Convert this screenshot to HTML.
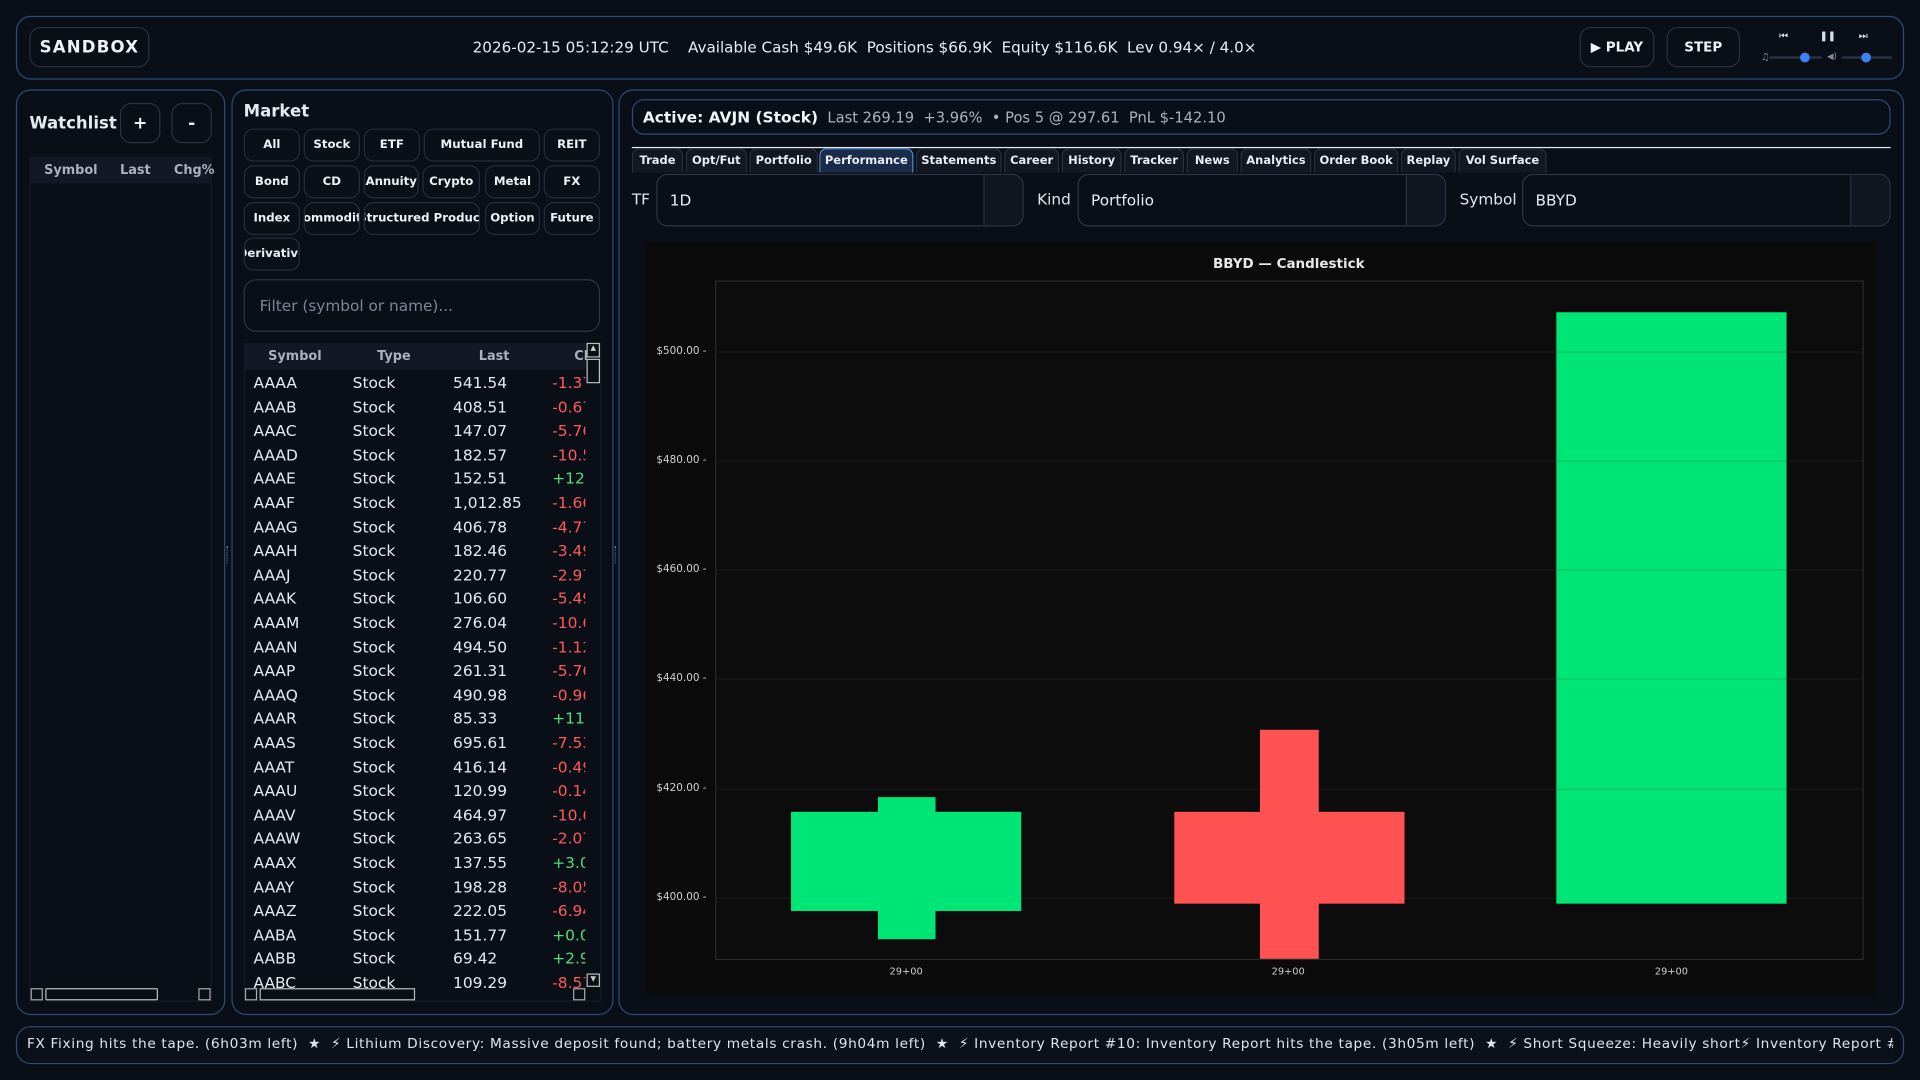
<!DOCTYPE html>
<html><head><meta charset="utf-8"><style>
*{box-sizing:border-box;margin:0;padding:0}
html,body{width:1920px;height:1080px;overflow:hidden;background:#0a0e17}
#s{position:absolute;left:0;top:0;width:1568px;height:882px;transform:scale(1.22449);transform-origin:0 0;font-family:"DejaVu Sans","Liberation Sans",sans-serif;color:#e6e9f0}
.a{position:absolute}
.panel{position:absolute;border:1px solid #2e4a78;border-radius:12px;background:#0a0e17}
.btn{position:absolute;border:1px solid #2a3040;border-radius:9px;background:#0a0e17;color:#f0f2f7;font-weight:bold;font-size:11px;display:flex;align-items:center;justify-content:center;white-space:nowrap;overflow:hidden}
.chip{position:absolute;border:1px solid #262c3a;border-radius:8px;background:#0b0f18;color:#eef0f5;font-weight:bold;font-size:9.6px;display:flex;align-items:center;justify-content:center;white-space:nowrap;overflow:hidden;height:27px}
.tab{position:absolute;top:121px;height:20px;border:1px solid #2a303c;border-bottom:none;border-radius:6px 6px 0 0;background:#121722;font-size:9.4px;font-weight:bold;color:#e8ebf2;display:flex;align-items:center;justify-content:center;white-space:nowrap}
.sel{position:absolute;top:142px;height:43px;border:1px solid #2f3442;border-radius:9px;background:#0a0e17;font-size:12.5px;color:#e8ebf2;padding-left:10px;display:flex;align-items:center}
.sel i{position:absolute;right:0;top:0;bottom:0;width:32px;border-left:1px solid #2f3442;background:#121620;border-radius:0 9px 9px 0}
.lbl{position:absolute;font-size:12.5px;color:#dfe3ea}
.row{position:absolute;left:207px;font-size:12.6px;height:19px;white-space:nowrap}
.row span{position:absolute;top:0}
.r{color:#ff5a5a}.g{color:#4ee07a}
.yl{position:absolute;left:527px;width:50px;text-align:right;font-size:8.5px;color:#d0d0d0}
.grid{position:absolute;left:585px;width:936px;height:1px;background:#1a1a1a}
</style></head><body><div id="s">
<!-- header -->
<div class="panel" style="left:13px;top:13px;width:1542px;height:52px"></div>
<div class="btn" style="left:24px;top:22px;width:98px;height:33px;font-size:13.5px;letter-spacing:1px">SANDBOX</div>
<div class="a" style="left:386px;top:31px;font-size:12.4px;white-space:nowrap;color:#e8ebf2">2026-02-15 05:12:29 UTC&nbsp;&nbsp;&nbsp;&nbsp;Available Cash $49.6K&nbsp;&nbsp;Positions $66.9K&nbsp;&nbsp;Equity $116.6K&nbsp;&nbsp;Lev 0.94× / 4.0×</div>
<div class="btn" style="left:1290px;top:22px;width:61px;height:33px">▶ PLAY</div>
<div class="btn" style="left:1361px;top:22px;width:60px;height:33px">STEP</div>
<div class="a" style="left:1453px;top:25px;font-size:8px;color:#dde">⏮</div>
<div class="a" style="left:1486px;top:25px;font-size:8px;color:#dde;font-weight:bold">❚❚</div>
<div class="a" style="left:1518px;top:25px;font-size:8px;color:#dde">⏭</div>
<div class="a" style="left:1438px;top:42px;font-size:8px;color:#889">♫</div>
<div class="a" style="left:1445px;top:46px;width:43px;height:2px;background:#2a3142"></div>
<div class="a" style="left:1470px;top:43px;width:8px;height:8px;border-radius:50%;background:#3b82f6"></div>
<div class="a" style="left:1492px;top:42px;font-size:7px;color:#889">◀)</div>
<div class="a" style="left:1504px;top:46px;width:41px;height:2px;background:#2a3142"></div>
<div class="a" style="left:1520px;top:43px;width:8px;height:8px;border-radius:50%;background:#3b82f6"></div>

<!-- watchlist -->
<div class="panel" style="left:13px;top:73px;width:171px;height:756px"></div>
<div class="a" style="left:24px;top:93px;font-size:13.5px;font-weight:bold">Watchlist</div>
<div class="btn" style="left:98px;top:84px;width:33px;height:33px;font-size:14px">+</div>
<div class="btn" style="left:140px;top:84px;width:33px;height:33px;font-size:14px">-</div>
<div class="a" style="left:24px;top:128px;width:149px;height:690px;border:1px solid #161b26"></div>
<div class="a" style="left:24px;top:128px;width:149px;height:22px;background:#141824;font-size:10.5px;font-weight:bold;color:#aab0bd"><span class="a" style="left:12px;top:5px">Symbol</span><span class="a" style="left:74px;top:5px">Last</span><span class="a" style="left:118px;top:5px">Chg%</span></div>
<div class="a" style="left:25px;top:807px;width:10px;height:10px;border:1px solid #aaa"></div>
<div class="a" style="left:37px;top:807px;width:92px;height:10px;border:1px solid #bbb;border-radius:1px"></div>
<div class="a" style="left:162px;top:807px;width:10px;height:10px;border:1px solid #aaa"></div>
<div class="a" style="left:185px;top:446px;width:2px;height:14px;border-left:1px dotted #667"></div>

<!-- market -->
<div class="panel" style="left:189px;top:73px;width:312px;height:756px"></div>
<div class="a" style="left:199px;top:83px;font-size:13.5px;font-weight:bold">Market</div>
<div class="chip" style="left:199px;top:105px;width:46px">All</div>
<div class="chip" style="left:248px;top:105px;width:46px">Stock</div>
<div class="chip" style="left:297px;top:105px;width:46px">ETF</div>
<div class="chip" style="left:346px;top:105px;width:95px">Mutual Fund</div>
<div class="chip" style="left:444px;top:105px;width:46px">REIT</div>
<div class="chip" style="left:199px;top:135px;width:46px">Bond</div>
<div class="chip" style="left:248px;top:135px;width:46px">CD</div>
<div class="chip" style="left:297px;top:135px;width:45px">Annuity</div>
<div class="chip" style="left:345px;top:135px;width:47px">Crypto</div>
<div class="chip" style="left:396px;top:135px;width:45px">Metal</div>
<div class="chip" style="left:444px;top:135px;width:46px">FX</div>
<div class="chip" style="left:199px;top:165px;width:46px">Index</div>
<div class="chip" style="left:248px;top:165px;width:46px">Commodity</div>
<div class="chip" style="left:297px;top:165px;width:95px">Structured Product</div>
<div class="chip" style="left:396px;top:165px;width:45px">Option</div>
<div class="chip" style="left:444px;top:165px;width:46px">Future</div>
<div class="chip" style="left:199px;top:194px;width:46px">Derivative</div>
<div class="a" style="left:199px;top:228px;width:291px;height:43px;border:1px solid #2f3442;border-radius:10px;font-size:12.5px;color:#7d8494;padding:13px 0 0 12px">Filter (symbol or name)...</div>
<div class="a" style="left:199px;top:280px;width:292px;height:538px;border:1px solid #161b26"></div>
<div class="a" style="left:199px;top:280px;width:280px;height:22px;background:#141824;font-size:10.5px;font-weight:bold;color:#aab0bd;overflow:hidden"><span class="a" style="left:20px;top:5px">Symbol</span><span class="a" style="left:109px;top:5px">Type</span><span class="a" style="left:192px;top:5px">Last</span><span class="a" style="left:270px;top:5px">Chg%</span></div>
<div class="a" style="left:479px;top:280px;width:11px;height:12px;border:1px solid #bbb;font-size:6px;text-align:center;color:#ccc">▲</div>
<div class="a" style="left:479px;top:293px;width:11px;height:20px;border:1px solid #bbb"></div>
<div class="a" style="left:479px;top:795px;width:11px;height:11px;border:1px solid #bbb;font-size:6px;text-align:center;color:#ccc">▼</div>
<div class="a" style="left:199px;top:303px;width:279px;height:504px;overflow:hidden">
<div style="position:relative;left:-199px;top:-303px">
<div class="row" style="top:305px"><span style="left:0">AAAA</span><span style="left:81px">Stock</span><span style="left:163px">541.54</span><span class="r" style="left:244px">-1.37</span></div>
<div class="row" style="top:325px"><span style="left:0">AAAB</span><span style="left:81px">Stock</span><span style="left:163px">408.51</span><span class="r" style="left:244px">-0.67</span></div>
<div class="row" style="top:344px"><span style="left:0">AAAC</span><span style="left:81px">Stock</span><span style="left:163px">147.07</span><span class="r" style="left:244px">-5.76</span></div>
<div class="row" style="top:364px"><span style="left:0">AAAD</span><span style="left:81px">Stock</span><span style="left:163px">182.57</span><span class="r" style="left:244px">-10.5</span></div>
<div class="row" style="top:383px"><span style="left:0">AAAE</span><span style="left:81px">Stock</span><span style="left:163px">152.51</span><span class="g" style="left:244px">+12.</span></div>
<div class="row" style="top:403px"><span style="left:0">AAAF</span><span style="left:81px">Stock</span><span style="left:163px">1,012.85</span><span class="r" style="left:244px">-1.66</span></div>
<div class="row" style="top:423px"><span style="left:0">AAAG</span><span style="left:81px">Stock</span><span style="left:163px">406.78</span><span class="r" style="left:244px">-4.77</span></div>
<div class="row" style="top:442px"><span style="left:0">AAAH</span><span style="left:81px">Stock</span><span style="left:163px">182.46</span><span class="r" style="left:244px">-3.49</span></div>
<div class="row" style="top:462px"><span style="left:0">AAAJ</span><span style="left:81px">Stock</span><span style="left:163px">220.77</span><span class="r" style="left:244px">-2.97</span></div>
<div class="row" style="top:481px"><span style="left:0">AAAK</span><span style="left:81px">Stock</span><span style="left:163px">106.60</span><span class="r" style="left:244px">-5.49</span></div>
<div class="row" style="top:501px"><span style="left:0">AAAM</span><span style="left:81px">Stock</span><span style="left:163px">276.04</span><span class="r" style="left:244px">-10.6</span></div>
<div class="row" style="top:521px"><span style="left:0">AAAN</span><span style="left:81px">Stock</span><span style="left:163px">494.50</span><span class="r" style="left:244px">-1.12</span></div>
<div class="row" style="top:540px"><span style="left:0">AAAP</span><span style="left:81px">Stock</span><span style="left:163px">261.31</span><span class="r" style="left:244px">-5.76</span></div>
<div class="row" style="top:560px"><span style="left:0">AAAQ</span><span style="left:81px">Stock</span><span style="left:163px">490.98</span><span class="r" style="left:244px">-0.96</span></div>
<div class="row" style="top:579px"><span style="left:0">AAAR</span><span style="left:81px">Stock</span><span style="left:163px">85.33</span><span class="g" style="left:244px">+11.</span></div>
<div class="row" style="top:599px"><span style="left:0">AAAS</span><span style="left:81px">Stock</span><span style="left:163px">695.61</span><span class="r" style="left:244px">-7.53</span></div>
<div class="row" style="top:619px"><span style="left:0">AAAT</span><span style="left:81px">Stock</span><span style="left:163px">416.14</span><span class="r" style="left:244px">-0.49</span></div>
<div class="row" style="top:638px"><span style="left:0">AAAU</span><span style="left:81px">Stock</span><span style="left:163px">120.99</span><span class="r" style="left:244px">-0.14</span></div>
<div class="row" style="top:658px"><span style="left:0">AAAV</span><span style="left:81px">Stock</span><span style="left:163px">464.97</span><span class="r" style="left:244px">-10.6</span></div>
<div class="row" style="top:677px"><span style="left:0">AAAW</span><span style="left:81px">Stock</span><span style="left:163px">263.65</span><span class="r" style="left:244px">-2.07</span></div>
<div class="row" style="top:697px"><span style="left:0">AAAX</span><span style="left:81px">Stock</span><span style="left:163px">137.55</span><span class="g" style="left:244px">+3.0</span></div>
<div class="row" style="top:717px"><span style="left:0">AAAY</span><span style="left:81px">Stock</span><span style="left:163px">198.28</span><span class="r" style="left:244px">-8.05</span></div>
<div class="row" style="top:736px"><span style="left:0">AAAZ</span><span style="left:81px">Stock</span><span style="left:163px">222.05</span><span class="r" style="left:244px">-6.94</span></div>
<div class="row" style="top:756px"><span style="left:0">AABA</span><span style="left:81px">Stock</span><span style="left:163px">151.77</span><span class="g" style="left:244px">+0.0</span></div>
<div class="row" style="top:775px"><span style="left:0">AABB</span><span style="left:81px">Stock</span><span style="left:163px">69.42</span><span class="g" style="left:244px">+2.9</span></div>
<div class="row" style="top:795px"><span style="left:0">AABC</span><span style="left:81px">Stock</span><span style="left:163px">109.29</span><span class="r" style="left:244px">-8.57</span></div>
</div></div>
<div class="a" style="left:200px;top:807px;width:10px;height:10px;border:1px solid #aaa"></div>
<div class="a" style="left:212px;top:807px;width:127px;height:10px;border:1px solid #bbb"></div>
<div class="a" style="left:468px;top:807px;width:10px;height:10px;border:1px solid #aaa"></div>
<div class="a" style="left:502px;top:446px;width:2px;height:14px;border-left:1px dotted #667"></div>

<!-- right panel -->
<div class="panel" style="left:505px;top:73px;width:1050px;height:756px"></div>
<div class="a" style="left:516px;top:81px;width:1028px;height:29px;border:1px solid #2e4a78;border-radius:10px;font-size:12px;white-space:nowrap;padding:6px 0 0 8px;color:#aab0bd"><b style="color:#f2f4f8;font-size:12.6px">Active: AVJN (Stock)</b>&nbsp; Last 269.19 &nbsp;+3.96% &nbsp;• Pos 5 @ 297.61 &nbsp;PnL $-142.10</div>
<div class="a" style="left:516px;top:120px;width:1028px;height:1px;background:#e8ebf2"></div>
<div class="tab" style="left:516px;width:42px">Trade</div>
<div class="tab" style="left:560px;width:50px">Opt/Fut</div>
<div class="tab" style="left:612px;width:56px">Portfolio</div>
<div class="tab" style="left:669px;width:77px;background:#1b2b4a;border:1px solid #4d8fd6;border-bottom:none">Performance</div>
<div class="tab" style="left:748px;width:70px">Statements</div>
<div class="tab" style="left:820px;width:45px">Career</div>
<div class="tab" style="left:867px;width:49px">History</div>
<div class="tab" style="left:918px;width:49px">Tracker</div>
<div class="tab" style="left:969px;width:42px">News</div>
<div class="tab" style="left:1013px;width:58px">Analytics</div>
<div class="tab" style="left:1073px;width:69px">Order Book</div>
<div class="tab" style="left:1144px;width:45px">Replay</div>
<div class="tab" style="left:1191px;width:72px">Vol Surface</div>
<div class="lbl" style="left:516px;top:155px">TF</div>
<div class="sel" style="left:536px;width:300px">1D<i></i></div>
<div class="lbl" style="left:847px;top:155px">Kind</div>
<div class="sel" style="left:880px;width:301px">Portfolio<i></i></div>
<div class="lbl" style="left:1192px;top:155px">Symbol</div>
<div class="sel" style="left:1243px;width:301px">BBYD<i></i></div>

<!-- chart -->
<div class="a" style="left:527px;top:198px;width:1006px;height:614px;background:#0b0b0b"></div>
<div class="a" style="left:527px;top:209px;width:1051px;text-align:center;font-size:11px;font-weight:bold;color:#e8e8e8">BBYD — Candlestick</div>
<div class="a" style="left:584px;top:229px;width:938px;height:555px;border:1px solid #2a2a2a;background:#0c0c0c"></div>
<div class="grid" style="top:287px"></div><div class="grid" style="top:376px"></div><div class="grid" style="top:465px"></div><div class="grid" style="top:554px"></div><div class="grid" style="top:644px"></div><div class="grid" style="top:733px"></div>
<div class="yl" style="top:282px">$500.00 -</div>
<div class="yl" style="top:371px">$480.00 -</div>
<div class="yl" style="top:460px">$460.00 -</div>
<div class="yl" style="top:549px">$440.00 -</div>
<div class="yl" style="top:639px">$420.00 -</div>
<div class="yl" style="top:728px">$400.00 -</div>
<div class="a" style="left:717px;top:651px;width:47px;height:116px;background:#00e676"></div>
<div class="a" style="left:646px;top:663px;width:188px;height:81px;background:#00e676"></div>
<div class="a" style="left:1029px;top:596px;width:48px;height:187px;background:#ff5252"></div>
<div class="a" style="left:959px;top:663px;width:188px;height:75px;background:#ff5252"></div>
<div class="a" style="left:1271px;top:255px;width:188px;height:483px;background:#00e676"></div>
<div class="grid" style="top:287px;left:1271px;width:188px;background:#10c060"></div>
<div class="grid" style="top:376px;left:1271px;width:188px;background:#10c060"></div>
<div class="grid" style="top:465px;left:1271px;width:188px;background:#10c060"></div>
<div class="grid" style="top:554px;left:1271px;width:188px;background:#10c060"></div>
<div class="grid" style="top:644px;left:1271px;width:188px;background:#10c060"></div>
<div class="a" style="left:720px;top:789px;width:40px;text-align:center;font-size:8px;color:#ccc">29+00</div>
<div class="a" style="left:1032px;top:789px;width:40px;text-align:center;font-size:8px;color:#ccc">29+00</div>
<div class="a" style="left:1345px;top:789px;width:40px;text-align:center;font-size:8px;color:#ccc">29+00</div>

<!-- ticker -->
<div class="panel" style="left:13px;top:838px;width:1542px;height:31px"></div>
<div class="a" style="left:22px;top:839px;width:1524px;height:29px;overflow:hidden;background:#0c101b"><div style="position:absolute;left:0;top:7px;white-space:nowrap;font-family:'DejaVu Sans','Liberation Sans',sans-serif;font-size:11.2px;letter-spacing:0.53px;color:#dfe3ea">FX Fixing hits the tape. (6h03m left) &nbsp;★&nbsp; ⚡ Lithium Discovery: Massive deposit found; battery metals crash. (9h04m left) &nbsp;★&nbsp; ⚡ Inventory Report #10: Inventory Report hits the tape. (3h05m left) &nbsp;★&nbsp; ⚡ Short Squeeze: Heavily short⚡ Inventory Report #11: Inventory Report hits the tape.</div></div>
</div></body></html>
